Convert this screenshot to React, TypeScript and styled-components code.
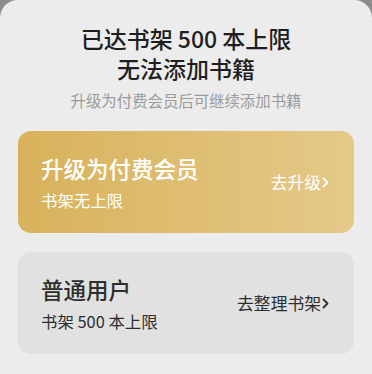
import React from "react";
import styled, { createGlobalStyle } from "styled-components";

const Global = createGlobalStyle`
  html, body { margin: 0; padding: 0; background: #8c8c8c; }
  body { font-family: "Noto Sans CJK SC", "Noto Sans", sans-serif; }
`;

const Dialog = styled.div`
  width: 372px;
  height: 374px;
  box-sizing: border-box;
  background: #ececec;
  border-radius: 18px 18px 0 0;
  padding: 23px 18px 0;
  display: flex;
  flex-direction: column;
  align-items: stretch;
`;

const Title = styled.h1`
  margin: 0;
  font-size: 23px;
  font-weight: 500;
  color: #1f1f1f;
  text-align: center;
`;

const TitleLine = styled.span`
  display: block;
  line-height: 30px;
`;

const Subtitle = styled.p`
  margin: 7px 0 0;
  font-size: 15.4px;
  line-height: 20px;
  color: #9b9b9b;
  text-align: center;
`;

const Cards = styled.div`
  margin-top: 21px;
  display: flex;
  flex-direction: column;
  gap: 19px;
`;

const Card = styled.div<{ $gold?: boolean }>`
  height: 102px;
  box-sizing: border-box;
  border-radius: 13px;
  padding: 0 25px 0 23px;
  display: flex;
  align-items: center;
  justify-content: space-between;
  background: ${(p) =>
    p.$gold ? "linear-gradient(90deg, #d8b25b 0%, #e5c989 100%)" : "#e1e1e1"};
  color: ${(p) => (p.$gold ? "#ffffff" : "#2e2e2e")};
`;

const Info = styled.div`
  display: flex;
  flex-direction: column;
  gap: 6px;
`;

const CardTitle = styled.div`
  font-size: 22.5px;
  line-height: 30px;
  font-weight: 500;
`;

const CardSub = styled.div`
  font-size: 16.4px;
  line-height: 22px;
`;

const Action = styled.div`
  font-size: 16.8px;
  line-height: 22px;
  display: flex;
  align-items: center;
  gap: 1px;
`;

const Chevron = styled.svg`
  width: 7px;
  height: 11px;
  margin-top: 1px;
`;

const Arrow = () => (
  <Chevron viewBox="0 0 7 11" fill="none">
    <path d="M1.5 1.5 L5.5 5.5 L1.5 9.5" stroke="currentColor" strokeWidth="1.8" strokeLinecap="round" strokeLinejoin="round" />
  </Chevron>
);

export default function App() {
  return (
    <>
      <Global />
      <Dialog>
        <Title>
          <TitleLine>已达书架 500 本上限</TitleLine>
          <TitleLine>无法添加书籍</TitleLine>
        </Title>
        <Subtitle>升级为付费会员后可继续添加书籍</Subtitle>
        <Cards>
          <Card $gold>
            <Info>
              <CardTitle>升级为付费会员</CardTitle>
              <CardSub>书架无上限</CardSub>
            </Info>
            <Action>
              去升级
              <Arrow />
            </Action>
          </Card>
          <Card>
            <Info>
              <CardTitle>普通用户</CardTitle>
              <CardSub>书架 500 本上限</CardSub>
            </Info>
            <Action>
              去整理书架
              <Arrow />
            </Action>
          </Card>
        </Cards>
      </Dialog>
    </>
  );
}
